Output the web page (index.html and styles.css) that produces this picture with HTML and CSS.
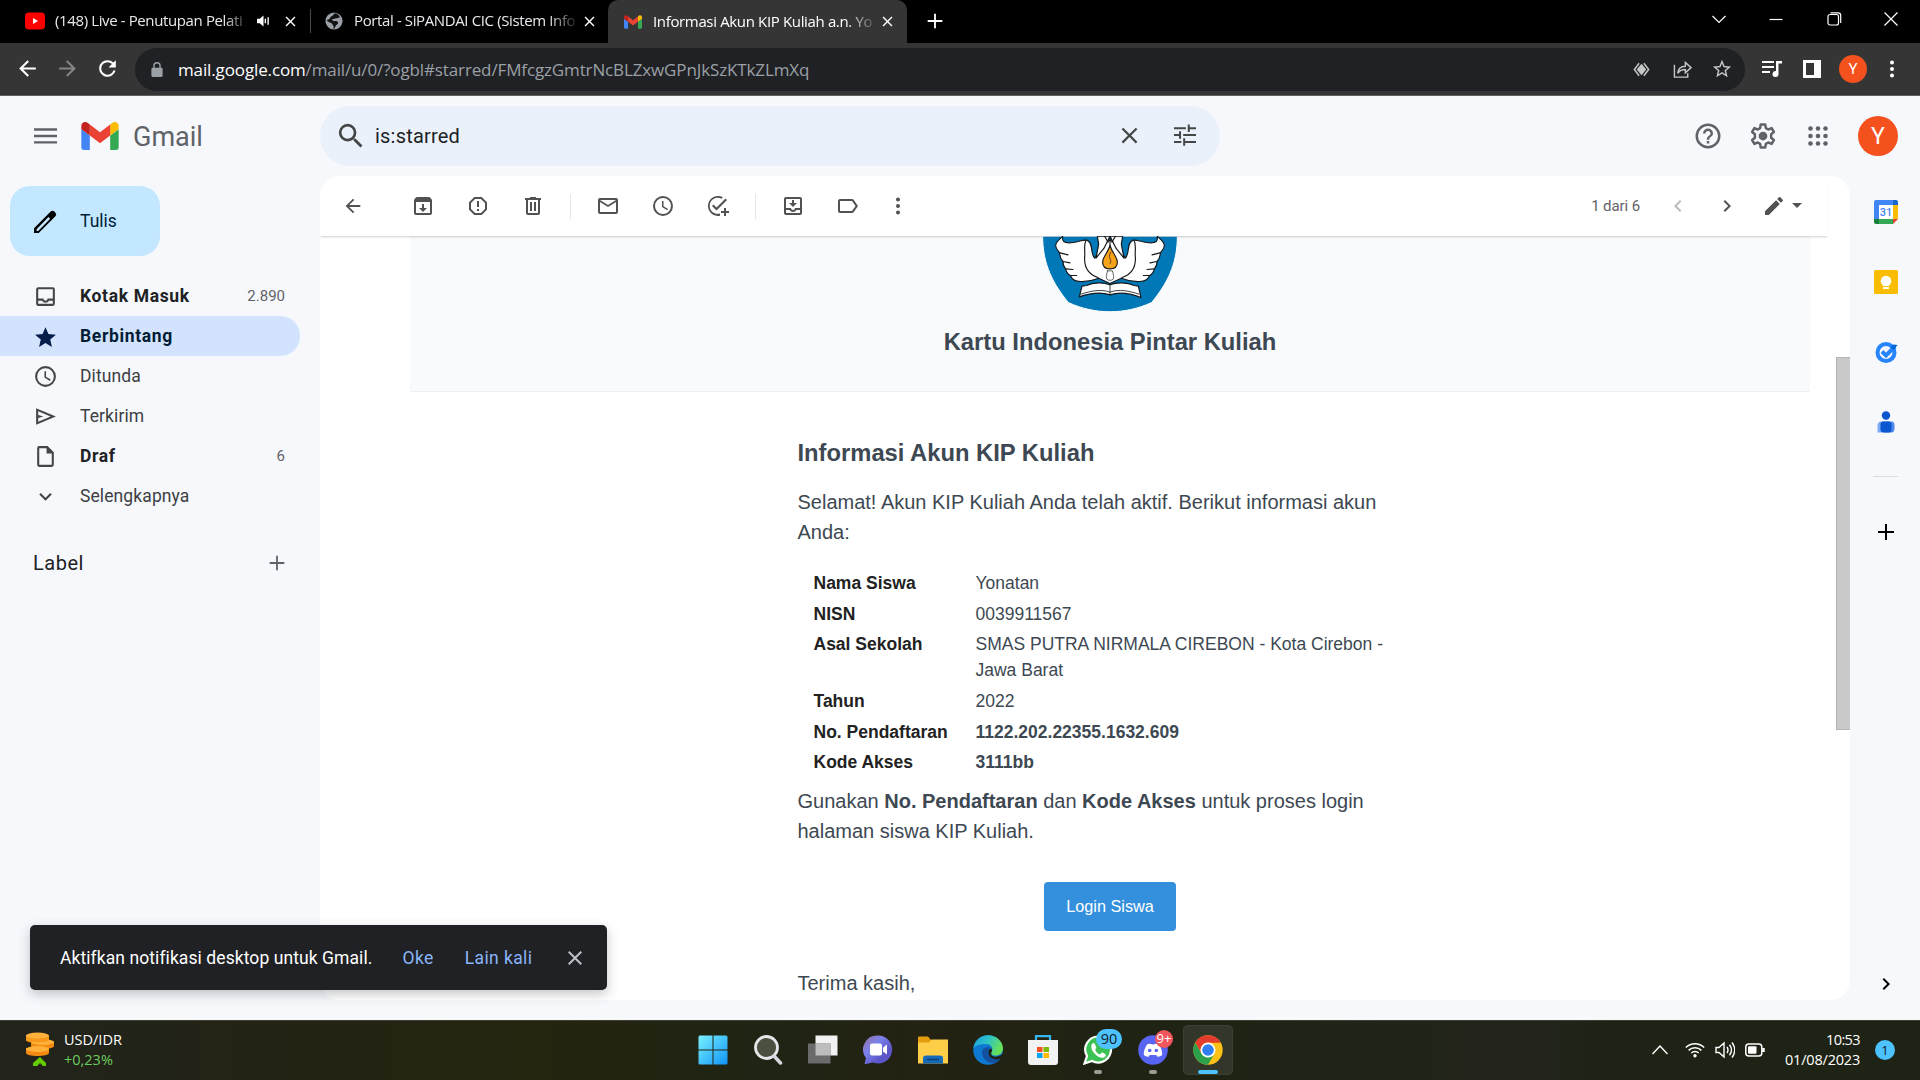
FILE: index.html
```html
<!DOCTYPE html>
<html lang="id">
<head>
<meta charset="utf-8">
<title>Informasi Akun KIP Kuliah a.n. Yonatan</title>
<link rel="stylesheet" href="styles.css">
</head>
<body>
<svg class="defs" aria-hidden="true">
  <defs>
    <symbol id="gm" viewBox="52 42 88 66"><path fill="#4285f4" d="M58 108h14V74L52 59v43c0 3.320 2.690 6 6 6"/><path fill="#34a853" d="M120 108h14c3.320 0 6-2.690 6-6V59l-20 15"/><path fill="#fbbc04" d="M120 48v26l20-15v-8c0-7.420-8.470-11.650-14.400-7.200"/><path fill="#ea4335" d="M72 74V48l24 18 24-18v26L96 92"/><path fill="#c5221f" d="M52 51v8l20 15V48l-5.600-4.200c-5.940-4.450-14.400-.22-14.400 7.200"/></symbol>
    <symbol id="x" viewBox="0 0 24 24"><path d="M19 6.410 17.590 5 12 10.590 6.410 5 5 6.410 10.590 12 5 17.590 6.410 19 12 13.410 17.590 19 19 17.590 13.410 12z"/></symbol>
    <symbol id="back" viewBox="0 0 24 24"><path d="M20 11H7.830l5.590-5.590L12 4l-8 8 8 8 1.410-1.410L7.830 13H20z"/></symbol>
    <symbol id="clock" viewBox="0 0 24 24"><path d="M12 2a10 10 0 1 0 0 20 10 10 0 0 0 0-20zm0 18a8 8 0 1 1 0-16 8 8 0 0 1 0 16zm.5-13H11v6l5.200 3.200.8-1.300-4.500-2.700z"/></symbol>
    <symbol id="right" viewBox="0 0 24 24"><path d="M10 6 8.590 7.410 13.170 12l-4.580 4.590L10 18l6-6z"/></symbol>
    <symbol id="plus" viewBox="0 0 24 24"><path d="M20 13h-7v7h-2v-7H4v-2h7V4h2v7h7z"/></symbol>
    <symbol id="dots" viewBox="0 0 24 24"><circle cx="12" cy="5.500" r="2"/><circle cx="12" cy="12" r="2"/><circle cx="12" cy="18.500" r="2"/></symbol>
  </defs>
</svg>

<div class="tabs">
  <div class="tab tab-yt">
    <svg class="fav" viewBox="0 0 20 18"><rect width="20" height="17" y=".5" rx="4" fill="#f00"/><path d="M8 6v6l5-3z" fill="#fff"/></svg>
    <span class="tab-t t1">(148) Live - Penutupan Pelati</span>
    <svg class="audio" viewBox="0 0 14 14"><path d="M0 4.500h3L7 1v12L3 9.500H0z"/><path d="M9 4.500v5M12 3v8" stroke="#fff" stroke-width="1.500"/></svg>
    <svg class="tx"><use href="#x"/></svg>
  </div>
  <div class="tab tab-portal">
    <svg class="fav globe" viewBox="0 0 20 20"><circle cx="10" cy="10" r="9.500" fill="#9aa0a6"/><path d="M10 2c3-1 6 2 6.500 4-2 0-2.500 1-4 1s-2 1-4 1 0 2 2 2 4 0 4 2-2 2-3 4-1 3-2 3c1-4-1-3-1-5S3 12 2 9c2-1 3-1 4-3s3-1 4-4z" fill="#111"/></svg>
    <span class="tab-t t2">Portal - SiPANDAI CIC (Sistem Info</span>
    <svg class="tx"><use href="#x"/></svg>
  </div>
  <div class="tab tab-active">
    <svg class="fav mail"><use href="#gm"/></svg>
    <span class="tab-t t3">Informasi Akun KIP Kuliah a.n. Yo</span>
    <svg class="tx"><use href="#x"/></svg>
  </div>
  <svg class="newtab"><use href="#plus"/></svg>
  <div class="winbtns">
    <svg viewBox="0 0 16 16"><path d="m1.500 5 6.500 6.500L14.500 5"/></svg>
    <svg viewBox="0 0 16 16"><path d="M1.500 8.500h13"/></svg>
    <svg viewBox="0 0 16 16"><rect x="2" y="3.500" width="10.500" height="10.500" rx="2"/><path d="M4.500 1.800h7.500a2.700 2.700 0 0 1 2.700 2.700V12"/></svg>
    <svg viewBox="0 0 16 16"><path d="m1.500 1.500 13 13m0-13-13 13"/></svg>
  </div>
</div>

<div class="bar">
  <svg class="nav"><use href="#back"/></svg>
  <svg class="nav fwd"><use href="#back"/></svg>
  <svg class="nav reload" viewBox="0 0 24 24"><path d="M17.650 6.350A7.960 7.960 0 0 0 12 4a8 8 0 1 0 7.730 10h-2.080A6 6 0 1 1 12 6c1.660 0 3.140.69 4.220 1.780L13 11h7V4z"/></svg>
  <div class="omni">
    <svg class="lock" viewBox="0 0 12 16"><path d="M10.500 6H10V4a4 4 0 0 0-8 0v2h-.5C.7 6 0 6.700 0 7.500v7c0 .8.700 1.500 1.500 1.500h9c.8 0 1.500-.7 1.500-1.500v-7c0-.8-.7-1.500-1.500-1.500zM3.500 4a2.500 2.500 0 0 1 5 0v2h-5z"/></svg>
    <span class="url"><b>mail.google.com</b>/mail/u/0/?ogbl#starred/FMfcgzGmtrNcBLZxwGPnJkSzKTkZLmXq</span>
    <svg class="oi" viewBox="0 0 20 20"><path d="m10 4 5 6-5 6-5-6z"/><path d="M7.500 3.500 2.500 10l5 6.500M12.500 3.500l5 6.500-5 6.500" fill="none" stroke="#c4c7c5" stroke-width="1.600"/></svg>
    <svg class="oi sh" viewBox="0 0 20 20"><path d="M1.500 5v13h14v-4M5 14c.5-5 3-7.500 8-7.500V2.500L19 8l-6 5.500V10c-4 0-6 1-8 4z" fill="none" stroke="#c4c7c5" stroke-width="1.500"/></svg>
    <svg class="oi st" viewBox="0 0 24 24"><path d="m22 9.240-7.190-.62L12 2 9.190 8.630 2 9.240l5.460 4.730L5.820 21 12 17.270 18.180 21l-1.630-7.030zM12 15.400l-3.760 2.270 1-4.280-3.320-2.880 4.380-.38L12 6.100l1.710 4.040 4.380.38-3.320 2.880 1 4.280z"/></svg>
  </div>
  <svg class="bi" viewBox="0 0 20 20"><path d="M0 2h12v2H0zm0 5h12v2H0zm0 5h8v2H0zM14 2h6v2.500h-3.500V15a3 3 0 1 1-2.500-3z"/></svg>
  <svg class="bi" viewBox="0 0 20 20"><path d="M1 1h18v18H1zm3 3v12h8V4z" fill-rule="evenodd"/></svg>
  <span class="av small">Y</span>
  <svg class="bi kebab"><use href="#dots"/></svg>
</div>

<div class="gmail">
  <header class="top">
    <svg class="burger" viewBox="0 0 24 16"><path d="M0 0h24v2.500H0zm0 6.700h24v2.500H0zm0 6.700h24v2.500H0z"/></svg>
    <svg class="glogo"><use href="#gm"/></svg>
    <span class="gname">Gmail</span>
    <div class="search">
      <svg class="mag" viewBox="0 0 24 24"><path d="M15.500 14h-.79l-.28-.27A6.470 6.470 0 0 0 16 9.500 6.500 6.500 0 1 0 9.500 16c1.610 0 3.090-.59 4.230-1.570l.27.28v.79l5 4.990L20.490 19zm-6 0a4.500 4.500 0 1 1 0-9 4.500 4.500 0 0 1 0 9z" transform="translate(-3 -3) scale(1.250)"/></svg>
      <span class="q">is:starred</span>
      <svg class="sx"><use href="#x"/></svg>
      <svg class="tune" viewBox="0 0 24 24"><path d="M0 3.500h13v2.200H0zm15-3h2.200v3H24v2.200h-6.800v3H15zM0 11h5.500V8h2.200v8H5.500v-3H0zm10 0h14v2.200H10zm-10 7.500h8v2.200H0zm10-3h2.200v3H24v2.200H12.200v3H10z"/></svg>
    </div>
    <div class="topright">
      <svg viewBox="0 0 24 24"><path d="M11 18h2v-2h-2zm1-16a10 10 0 1 0 0 20 10 10 0 0 0 0-20zm0 18a8 8 0 1 1 0-16 8 8 0 0 1 0 16zm0-14a4 4 0 0 0-4 4h2a2 2 0 1 1 4 0c0 2-3 1.750-3 5h2c0-2.250 3-2.500 3-5a4 4 0 0 0-4-4z"/></svg>
      <svg viewBox="0 0 24 24"><path fill="none" stroke="#5f6368" stroke-width="2" stroke-linejoin="round" d="M10.200 2.800h3.600l.5 2.900 1.900 1.100 2.700-1.100 1.800 3.100-2.200 1.800v2.800l2.200 1.800-1.800 3.100-2.700-1.100-1.900 1.100-.5 2.900h-3.600l-.5-2.900-1.900-1.100-2.700 1.100-1.800-3.100 2.200-1.800v-2.800L3.300 8.800l1.800-3.100 2.700 1.100 1.900-1.100z"/><circle cx="12" cy="12" r="3.500"/></svg>
      <svg viewBox="0 0 24 24"><g id="r"><circle cx="4.500" cy="4.500" r="2.300"/><circle cx="12" cy="4.500" r="2.300"/><circle cx="19.500" cy="4.500" r="2.300"/></g><use href="#r" y="7.500"/><use href="#r" y="15"/></svg>
      <span class="av">Y</span>
    </div>
  </header>

  <div class="body">
    <aside class="side">
      <div class="compose">
        <svg viewBox="0 0 24 24"><path d="M1 18.500 17 2.500a2.500 2.500 0 0 1 3.500 0l1 1a2.500 2.500 0 0 1 0 3.500l-16 16H1zm2.500 1V21H5L16.500 9.300l-1.700-1.700z" fill-rule="evenodd"/></svg>
        <span>Tulis</span>
      </div>
      <div class="row bold"><svg viewBox="0 0 24 24"><path d="M19 3H5a2 2 0 0 0-2 2v14c0 1.100.9 2 2 2h14a2 2 0 0 0 2-2V5a2 2 0 0 0-2-2zm0 16H5v-3h3.560a4 4 0 0 0 6.880 0H19zm0-5h-5a2 2 0 0 1-4 0H5V5h14z"/></svg><span>Kotak Masuk</span><i>2.890</i></div>
      <div class="row bold active"><svg viewBox="0 0 24 24"><path d="m12 18.270 6.180 3.730-1.640-7.030L22 10.240l-7.190-.61L12 3 9.190 9.630 2 10.240l5.460 4.730L5.820 22z"/></svg><span>Berbintang</span></div>
      <div class="row"><svg viewBox="0 0 24 24"><use href="#clock"/></svg><span>Ditunda</span></div>
      <div class="row"><svg viewBox="0 0 24 24"><path d="M3 4v16l19-8zm2 3 11.850 5L5 17v-3.500l5-1.500-5-1.500z"/></svg><span>Terkirim</span></div>
      <div class="row bold"><svg viewBox="0 0 24 24"><path d="M14 2H6a2 2 0 0 0-2 2v16c0 1.100.9 2 2 2h12a2 2 0 0 0 2-2V8zM6 20V4h7v5h5v11z"/></svg><span>Draf</span><i>6</i></div>
      <div class="row"><svg viewBox="0 0 24 24"><path d="M7.410 8.590 12 13.170l4.590-4.580L18 10l-6 6-6-6z"/></svg><span>Selengkapnya</span></div>
      <div class="label"><span>Label</span><svg><use href="#plus"/></svg></div>
    </aside>

    <main class="panel">
      <div class="tools">
        <span class="s w66"><svg><use href="#back"/></svg></span>
        <span class="s a"><svg viewBox="0 0 24 24"><path d="M20.540 5.230 19.150 3.550A1.450 1.450 0 0 0 18 3H6c-.47 0-.88.21-1.160.55L3.460 5.230C3.170 5.570 3 6.020 3 6.500V19a2 2 0 0 0 2 2h14a2 2 0 0 0 2-2V6.500c0-.48-.17-.93-.46-1.270zM5 19V8h14v11zm6-9h2v4h3l-4 4-4-4h3z"/></svg></span>
        <span class="s"><svg viewBox="0 0 24 24"><path d="M15.730 3H8.270L3 8.270v7.460L8.270 21h7.460L21 15.730V8.270zM19 14.900 14.900 19H9.100L5 14.900V9.100L9.100 5h5.800L19 9.100zM11 7h2v6h-2zm0 8h2v2h-2z"/></svg></span>
        <span class="s"><svg viewBox="0 0 24 24"><path d="M15 4V3H9v1H4v2h1v13a2 2 0 0 0 2 2h10a2 2 0 0 0 2-2V6h1V4zm2 15H7V6h10zM9 8h2v9H9zm4 0h2v9h-2z"/></svg></span>
        <span class="sep"></span>
        <span class="s"><svg viewBox="0 0 24 24"><path d="M20 4H4a2 2 0 0 0-2 2v12c0 1.100.9 2 2 2h16a2 2 0 0 0 2-2V6a2 2 0 0 0-2-2zm0 14H4V8l8 5 8-5zm-8-7L4 6h16z"/></svg></span>
        <span class="s"><svg><use href="#clock"/></svg></span>
        <span class="s"><svg viewBox="0 0 24 24"><path d="M14 19.500A8 8 0 1 1 15.500 4.800l1.400-1.500A10 10 0 1 0 14 21.800zM7.500 10.500 6 12l4.500 4.500L21 6l-1.500-1.500-9 9zM20 14h-2v3h-3v2h3v3h2v-3h3v-2h-3z"/></svg></span>
        <span class="sep"></span>
        <span class="s"><svg viewBox="0 0 24 24"><path d="M19 3H5a2 2 0 0 0-2 2v14c0 1.100.9 2 2 2h14a2 2 0 0 0 2-2V5a2 2 0 0 0-2-2zm0 16H5v-3h3.560a4 4 0 0 0 6.880 0H19zm0-5h-5a2 2 0 0 1-4 0H5V5h14zM11 6h2v3h3l-4 4-4-4h3z"/></svg></span>
        <span class="s"><svg viewBox="0 0 24 24"><path d="M16 5H4a2 2 0 0 0-2 2v10c0 1.100.9 2 2 2h12c.67 0 1.270-.34 1.630-.84L22 12l-4.370-6.160A2 2 0 0 0 16 5zm0 12H4V7h12l3.550 5z"/></svg></span>
        <span class="s w45"><svg><use href="#dots"/></svg></span>
        <span class="count">1 dari 6</span>
        <span class="s w49 dim"><svg class="flip"><use href="#right"/></svg></span>
        <span class="s w49"><svg><use href="#right"/></svg></span>
        <span class="s w26"><svg viewBox="0 0 24 24"><path d="M3 17.250V21h3.750L17.810 9.940l-3.750-3.750zM20.710 7.040a1 1 0 0 0 0-1.410l-2.340-2.340a1 1 0 0 0-1.410 0l-1.830 1.830 3.750 3.750z"/></svg></span>
        <span class="s w20"><svg viewBox="0 0 24 24"><path d="m7 9 5 5 5-5z"/></svg></span>
      </div>
      <div class="scroll">
        <div class="mail-head">
          <svg class="emblem" viewBox="246 198 408 230">
            <path d="M248 198h404c0 70-20 130-77 199-80 37-170 37-250 0-57-69-77-129-77-199z" fill="#0077b6" stroke="#fff" stroke-width="3"/>
            <g fill="#fff" stroke="#16181a" stroke-width="3.500" stroke-linejoin="round" stroke-linecap="round">
              <path d="M308 198c-6 8-20 14-21 28 0 10 6 14 12 22 0 12 4 20 10 26 0 10 2 16 8 22 2 10 6 16 14 20 6 14 16 18 30 18 20 1 40-4 55-10l34 16 34-16c15 6 35 11 55 10 14 0 24-4 30-18 8-4 12-10 14-20 6-6 8-12 8-22 6-6 10-14 10-26 6-8 12-12 12-22-1-14-15-20-21-28 2 16-4 20-20 20-20 0-40-10-52-8-14 4-14 20-16 34-2 10-4 16-8 20-8-10-12-30-20-40l-26-14-26 14c-8 10-12 30-20 40-4-4-6-10-8-20-2-14-2-30-16-34-12-2-32 8-52 8-16 0-22-4-20-20z"/>
              <path d="M378 210c-8 14-2 30-4 50-2 30 10 52 40 62M522 210c8 14 2 30 4 50 2 30-10 52-40 62M300 248l24 6M309 274l21 4M317 296l22 2M332 316l18 0M600 248l-24 6M591 274l-21 4M583 296l-22 2M568 316h-18" fill="none"/>
              <path d="M412 198l4 24-8 42 24-30 18-36 18 36 24 30-8-42 4-24z"/>
              <path d="M450 202v30M434 198l10 18M466 198l-10 18" fill="none"/>
              <path d="M450 226c-6 22-22 34-22 50 0 12 8 20 22 20s22-8 22-20c0-16-16-28-22-50z" fill="#f6a21b"/>
              <path d="M452 246c-12 22 8 20-2 34" fill="none" stroke-width="2"/>
              <path d="M443 302h14c4 10 2 10 4 18 2 14-24 14-22 0 2-8 0-8 4-18z" stroke-width="2"/>
              <path d="M450 344c-20-8-50-8-70 2l-14 2-8 32c30-10 62-16 92-6 30-10 62-4 93 8l-8-34-12-2c-22-10-53-10-73-2z"/>
              <path d="M450 344v28M363 372c30-10 60-16 87-6 27-10 57-4 87 6" fill="none" stroke-width="2.500"/>
            </g>
          </svg>
          <h1 class="h">Kartu Indonesia Pintar Kuliah</h1>
        </div>
        <article class="msg">
          <h2 class="h">Informasi Akun KIP Kuliah</h2>
          <p>Selamat! Akun KIP Kuliah Anda telah aktif. Berikut informasi akun<br>Anda:</p>
          <table>
            <tr><th>Nama Siswa</th><td>Yonatan</td></tr>
            <tr><th>NISN</th><td>0039911567</td></tr>
            <tr><th>Asal Sekolah</th><td>SMAS PUTRA NIRMALA CIREBON - Kota Cirebon -<br>Jawa Barat</td></tr>
            <tr><th>Tahun</th><td>2022</td></tr>
            <tr><th>No. Pendaftaran</th><td><b>1122.202.22355.1632.609</b></td></tr>
            <tr><th>Kode Akses</th><td><b>3111bb</b></td></tr>
          </table>
          <p class="use">Gunakan <b>No. Pendaftaran</b> dan <b>Kode Akses</b> untuk proses login<br>halaman siswa KIP Kuliah.</p>
          <div class="btnrow"><a class="btn">Login Siswa</a></div>
          <p class="thanks">Terima kasih,</p>
        </article>
        <div class="thumb"></div>
      </div>
    </main>

    <aside class="rail">
      <svg viewBox="0 0 24 24"><path fill="#4285f4" d="M0 2a2 2 0 0 1 2-2h17v5H5v14H0z"/><path fill="#1967d2" d="M19 0h3a2 2 0 0 1 2 2v3h-5z"/><path fill="#fbbc04" d="M19 5h5v14h-5z"/><path fill="#34a853" d="M5 19h14v5H5z"/><path fill="#188038" d="M0 19h5v5H2a2 2 0 0 1-2-2z"/><path fill="#ea4335" d="M19 19h5l-5 5z"/><path fill="#fff" d="M5 5h14v14H5z"/><text x="12" y="16" text-anchor="middle" font-family="Roboto, sans-serif" font-size="11" font-weight="500" fill="#4285f4">31</text></svg>
      <svg viewBox="0 0 24 24"><rect width="24" height="24" rx="1.500" fill="#fbbc04"/><circle cx="12" cy="11" r="5.300" fill="#fff"/><path d="M9 14h6v2H9zm0 3h6v2H9z" fill="#fff"/></svg>
      <svg viewBox="0 0 24 24"><circle cx="12" cy="12.500" r="8.500" fill="none" stroke="#2684fc" stroke-width="4"/><path d="m8 11.500 4 4 9-9" fill="none" stroke="#2684fc" stroke-width="4"/><path d="m16.500 7.500 3-3 4 .5-4 5z" fill="#0066da"/></svg>
      <svg viewBox="0 0 24 24"><circle cx="12" cy="5.500" r="4.200" fill="#0b57d0"/><path d="M7 11.500h5v11H3.500V16c0-3 1.500-4.500 3.500-4.500z" fill="#7baaf7"/><path d="M12 11.500h5.500c2 0 3 1.500 3 4V18c0 3-1 4.500-3 4.500H12z" fill="#4f86ec"/><rect x="6.500" y="11.500" width="11" height="11" rx="3" fill="#0b57d0"/></svg>
      <hr>
      <svg class="add"><use href="#plus"/></svg>
      <svg class="hide"><use href="#right"/></svg>
    </aside>
  </div>
</div>

<div class="snack">
  <span>Aktifkan notifikasi desktop untuk Gmail.</span>
  <a class="ok">Oke</a>
  <a class="later">Lain kali</a>
  <svg><use href="#x"/></svg>
</div>

<footer class="taskbar">
  <div class="widget">
    <svg viewBox="0 0 28 36"><path d="M7 34h4l3-3 3 3h3v-3l-6-6-7 6z" fill="#6c0"/><g fill="#f28a12"><path d="M0 16h23v5c0 4-23 4-23 0z"/><path d="M5 9h23v5c0 4-23 4-23 0z"/><path d="M0 3h23v5c0 4-23 4-23 0z"/></g><g fill="#ffb13b"><ellipse cx="11.500" cy="17" rx="11.500" ry="3"/><ellipse cx="16.500" cy="10" rx="11.500" ry="3"/><path d="M0 4h23v4c0 3-23 3-23 0z" fill="#f79a1c"/><ellipse cx="11.500" cy="3.500" rx="11.500" ry="3"/></g></svg>
    <div><span>USD/IDR</span><span class="up">+0,23%</span></div>
  </div>
  <div class="apps">
    <span><svg viewBox="0 0 30 30"><defs><linearGradient id="w" x1="0" y1="0" x2="30" y2="30" gradientUnits="userSpaceOnUse"><stop stop-color="#7df3ff"/><stop offset="1" stop-color="#0c92f7"/></linearGradient></defs><path fill="url(#w)" d="M.5 2q0-1.500 1.500-1.500h12.500v14H.5zM15.500.5H28q1.500 0 1.500 1.500v12.500h-14zM.5 15.500h14v14H2Q.5 29.500.5 28zm15 0h14V28q0 1.500-1.500 1.500H15.500z"/></svg></span>
    <span><svg viewBox="0 0 30 30"><circle cx="13.500" cy="12.500" r="11" fill="#4a4f40" stroke="#e4e6ea" stroke-width="2.800"/><path d="m21 21 6.500 7" stroke="#d5d8de" stroke-width="3.500" stroke-linecap="round"/></svg></span>
    <span><svg viewBox="0 0 30 30"><path fill="#f2f2f2" d="M7.500.5h22v20h-22z"/><path fill="#6b6b6b" d="M0 8.500h22.500v20H0z"/><path fill="#bdbdbd" d="M7.500 8.500h15v12h-15z"/></svg></span>
    <span><svg viewBox="0 0 30 30"><defs><linearGradient id="c" x1="0" y1="0" x2="1" y2="1"><stop stop-color="#9a6a96"/><stop offset=".35" stop-color="#7b83eb"/><stop offset=".7" stop-color="#5b55c8"/></linearGradient></defs><path fill="url(#c)" d="M15 .5a14 14 0 1 1-5 27L1.500 29.300 3 23A14 14 0 0 1 15 .5z"/><rect x="7" y="8.500" width="12" height="12" rx="2" fill="#fff"/><path d="m20 12.500 4-3v10l-4-3z" fill="#fff"/></svg></span>
    <span><svg viewBox="0 0 30 30"><path fill="#e39c0e" d="M0 2.500Q0 1.500 1 1.500h9l3 3.500v4H0z"/><path fill="#ffce48" d="M0 7.500h11l2.500-3H30v24H0z"/><path fill="#1469b8" d="M5 28.500v-5q0-3 3-3h14q3 0 3 3v5z"/><path stroke="#0a3f77" stroke-width="1.500" d="M9 24.500h12"/></svg></span>
    <span><svg viewBox="0 0 30 30"><defs><linearGradient id="e" x1="0" y1="0" x2="1" y2=".4"><stop stop-color="#1a9de0"/><stop offset=".5" stop-color="#2cc3c8"/><stop offset="1" stop-color="#66e05a"/></linearGradient></defs><circle cx="15" cy="15" r="14.800" fill="#0f78d0"/><path fill="#1351a0" d="M9 17c0 7 6 12 13 11 3-1 5-3 6.500-5.500-8 3-13-1-13-6.500 0-2 .5-3 1.500-4-5 0-8 2-8 5z"/><path fill="url(#e)" d="M.3 13.500C1.500 5.500 7.500.2 15 .2c8.500 0 15 6.300 15 13.300 0 4-3 7-7 7-4.500 0-5.500-2-4.500-3.500 2-3 .5-8-5.500-8C7 9 2 10.500.3 13.500z"/><path fill="#1e2313" d="M18.500 17c-1.500 3 1.500 5.500 5.500 4.500 2-.5 4-1.500 6-2.500v4.500c-1 0-2 0-3 .3-6 2-11.500-1.300-11.500-6.300 0-3 1.500-4.500 2.500-4 1 .5 1.500 2 .5 3.500z"/></svg></span>
    <span><svg viewBox="0 0 30 30"><path d="M8 6V1.200h14V6" fill="none" stroke="#35b6ee" stroke-width="2.200"/><path fill="#f2f2f2" d="M0 5h30v22q0 3-3 3H3q-3 0-3-3z"/><path fill="#f25022" d="M9 12h5.500v5H9z"/><path fill="#7fba00" d="M15.500 12H21v5h-5.500z"/><path fill="#00a4ef" d="M9 18h5.500v5H9z"/><path fill="#ffb900" d="M15.500 18H21v5h-5.500z"/></svg></span>
    <span class="run"><svg viewBox="0 0 30 30"><path d="M15.500 1.500a13 13 0 1 1-6.500 24.500L1.500 28.500 4 21A13 13 0 0 1 15.500 1.500z" fill="#3cc254" stroke="#fff" stroke-width="2.200"/><path fill="#fff" d="M10 8c-3 2-2 7 2 11s8 5 10.500 2.500c1-1.500 0-2.500-3-4-1-.500-2 2-3 1.700-2-.7-4-3-4.300-4.500 0-.8 1.500-1.500 1-2.500-.8-2-1.500-4.700-3.200-4.200z"/></svg><em class="b90">90</em></span>
    <span class="run"><svg viewBox="0 0 30 30"><circle cx="15" cy="15" r="14.800" fill="#5865f2"/><path fill="#fff" d="M9 9.500c3-1.500 3 0 6 0s3-1.500 6 0c2 3 3.500 7 3.200 10.500-2 1.500-4 2-5 1.500l-1-1.500h-6.400l-1 1.500c-1 .5-3 0-5-1.500C5.500 16.500 7 12.500 9 9.500z"/><circle cx="11.700" cy="15.500" r="1.800" fill="#5865f2"/><circle cx="18.300" cy="15.500" r="1.800" fill="#5865f2"/></svg><em class="b9">9+</em></span>
    <span class="run cur"><svg viewBox="0 0 48 48"><circle cx="24" cy="24" r="23.500" fill="#fbc116"/><path fill="#e33b2e" d="M3.600 12.200a23.500 23.500 0 0 1 40.800 0H24a11.800 11.800 0 0 0-10.200 17.700z"/><path fill="#2ca14c" d="M3.600 12.200 13.800 29.900A11.800 11.800 0 0 0 34.200 29.900L24 47.500A23.500 23.500 0 0 1 3.600 12.200z"/><circle cx="24" cy="24" r="12" fill="#fff"/><circle cx="24" cy="24" r="9.300" fill="#2f7ff0"/></svg></span>
  </div>
  <div class="tray">
    <svg class="up2" viewBox="0 0 16 10"><path d="m.5 9 7.500-8 7.500 8"/></svg>
    <svg class="wifi" viewBox="0 0 20 16"><path d="M.8 5.500a13 13 0 0 1 18.400 0M3.600 8.400a9 9 0 0 1 12.800 0M6.300 11a5.300 5.300 0 0 1 7.400 0" stroke-width="1.500"/><circle cx="10" cy="13.800" r="1.700" fill="#fff" stroke="none"/></svg>
    <svg class="vol" viewBox="0 0 20 18"><path d="M1 6.500h3l5-4.500v14l-5-4.500H1zM12 6q2 3 0 6M14.500 3.800q4 5.200 0 10.400M17 1.500q5.500 7.500 0 15"/></svg>
    <svg class="bat" viewBox="0 0 20 14"><rect x=".8" y="1" width="16" height="12" rx="3" stroke-width="1.500"/><rect x="3" y="3.200" width="8.500" height="7.600" rx="1" fill="#fff" stroke="none"/><path d="M18.500 5v4" stroke-width="2.500"/></svg>
    <div class="time"><span class="hm">10:53</span><span>01/08/2023</span></div>
    <span class="n">1</span>
  </div>
</footer>
</body>
</html>
```
FILE: styles.css
```css
* { box-sizing: border-box; }
body { margin: 0; width: 1920px; height: 1080px; overflow: hidden; display: flex; flex-direction: column; background: #f6f8fc; font-family: Roboto, "Liberation Sans", sans-serif; }
svg { display: block; flex: none; width: 25px; height: 25px; }
.defs { position: absolute; width: 0; height: 0; }

.tabs { height: 43px; flex: none; background: #000; display: flex; align-items: center; color: #e8eaed; font: 15px "Open Sans", "Noto Sans", sans-serif; padding-bottom: 1px; }
.tab { display: flex; align-items: center; height: 24px; flex: none; }
.tab-yt { width: 311px; padding-left: 25px; border-right: 1px solid #4a4a4a; }
.tab-portal { width: 297px; padding-left: 14px; }
.tab-active { width: 299px; height: 43px; padding-left: 16px; background: #353535; border-radius: 10px 10px 0 0; margin-bottom: -1px; }
.fav { width: 20px; height: 18px; }
.globe { width: 18px; }
.mail { width: 18px; height: 14px; }
.tab-t { white-space: nowrap; margin-bottom: 2px; -webkit-mask-image: linear-gradient(90deg, #000 88%, transparent 102%); }
.t1 { width: 192px; margin-left: 10px; letter-spacing: -.38px; }
.t2 { width: 221px; margin-left: 11px; letter-spacing: -.38px; }
.t3 { width: 220px; margin-left: 11px; color: #fff; letter-spacing: -.35px; }
.audio { width: 13px; height: 14px; fill: #fff; margin-left: 10px; }
.tx { width: 17px; height: 17px; fill: #fff; }
.tab-yt .tx { margin-left: 12px; }
.tab-portal .tx, .tab-active .tx { margin-left: 6px; }
.newtab { width: 22px; height: 22px; fill: #fff; margin-left: 17px; }
.winbtns { margin-left: auto; display: flex; gap: 41.500px; margin-right: 21px; margin-bottom: 5px; }
.winbtns svg { width: 16px; height: 16px; fill: none; stroke: #fff; stroke-width: 1.200; }

.bar { height: 53px; flex: none; background: #353535; border-bottom: 1px solid #606060; display: flex; align-items: center; padding: 0 15px 0 15px; }
.nav { width: 25px; height: 25px; fill: #fff; margin-bottom: 1px; }
.fwd { transform: scaleX(-1); fill: #858585; margin-left: 15px; }
.reload { margin-left: 15px; }
.omni { margin-left: 15px; width: 1610px; height: 43px; border-radius: 22px; background: #202124; display: flex; align-items: center; padding-left: 16px; }
.lock { width: 12px; height: 15px; fill: #9aa0a6; }
.url { margin-left: 15px; font: 17px "Open Sans", "Noto Sans", sans-serif; letter-spacing: -.13px; color: #9aa0a6; width: max-content; white-space: nowrap; }
.url b { color: #fff; font-weight: 400; }
.oi { fill: #c4c7c5; width: 19px; height: 19px; }
.url + .oi { margin-left: auto; }
.sh { margin-left: 22px; }
.st { width: 22px; height: 22px; margin: 0 12px 0 19px; }
.bi { width: 20px; height: 20px; fill: #fff; margin-left: 17px; }
.bi + .bi { margin-left: 20px; }
.av { width: 40px; height: 40px; border-radius: 50%; background: #f4511e; color: #fff; font-size: 23px; display: flex; align-items: center; justify-content: center; }
.small { width: 28px; height: 28px; font-size: 15px; margin-left: 17px; }
.bar .kebab { width: 24px; height: 24px; margin-left: 13px; }

.gmail { flex: 1; min-height: 0; display: flex; flex-direction: column; }
.top { height: 80px; flex: none; display: flex; align-items: center; fill: #5f6368; }
.burger { width: 23px; height: 16px; margin-left: 34px; }
.glogo { width: 38px; height: 28px; margin-left: 24px; }
.gname { width: 187px; margin-left: 14px; font-size: 27px; color: #5f6368; line-height: 30px; margin-top: 1px; }
.search { width: 900px; height: 60px; border-radius: 30px; background: #eaf1fb; display: flex; align-items: center; padding-left: 18px; fill: #444746; }
.mag { width: 26px; height: 26px; overflow: visible; }
.q { width: 742px; margin-left: 11px; font-size: 20px; letter-spacing: .2px; color: #202124; }
.sx { width: 27px; height: 27px; margin-right: 30px; margin-left: -1px; margin-bottom: 1px; }
.tune { width: 24px; height: 22px; margin-bottom: 2px; }
.topright { margin-left: auto; margin-right: 22px; display: flex; align-items: center; gap: 25px; }
.topright svg { width: 30px; height: 30px; }
.topright svg:nth-child(3) { width: 24px; height: 24px; margin: 0 3px; }

.body { flex: 1; display: flex; min-height: 0; }
.side { width: 320px; padding-top: 10px; flex: none; color: #202124; font-size: 17.500px; }
.compose { margin: 0 0 20px 10px; width: 150px; height: 70px; border-radius: 20px; background: #c2e7ff; display: flex; align-items: center; padding-left: 23px; gap: 22px; color: #001d35; }
.row { width: 300px; height: 40px; display: flex; align-items: center; padding: 0 15px 0 33px; fill: #444746; color: #3c4043; letter-spacing: .1px; }
.row span { margin-left: 22px; }
.row i { margin-left: auto; font: 400 15px Roboto, sans-serif; color: #5f6368; }
.bold { font-weight: 700; color: #202124; letter-spacing: .65px; }
.row.bold i { letter-spacing: 0; }
.active { background: #d3e3fd; border-radius: 0 20px 20px 0; color: #001d35; fill: #041e49; }
.label { width: 300px; height: 40px; margin-top: 27px; padding: 0 12px 0 33px; display: flex; align-items: center; justify-content: space-between; font-size: 20px; letter-spacing: .5px; fill: #5f6368; }
.label svg { width: 22px; height: 22px; }

.panel { width: 1530px; height: 824px; border-radius: 20px; background: #fff; overflow: hidden; flex: none; }
.tools { width: 1508px; height: 60px; display: flex; align-items: center; fill: #505351; box-shadow: 0 2px 2px -1px rgba(60, 64, 67, .25); position: relative; z-index: 1; }
.s { width: 55px; flex: none; display: flex; justify-content: center; }
.w66 { width: 66px; } .w45 { width: 45px; } .w49 { width: 49px; } .w26 { width: 26px; } .w20 { width: 20px; }
.a { margin-left: 9px; }
.tools svg { width: 24px; height: 24px; }
.tools .w66 svg { width: 22px; height: 22px; }
.dim { fill: #b9bcbe; }
.flip { transform: scaleX(-1); }
.sep { width: 20px; height: 25px; flex: none; background: linear-gradient(#e4e6e8, #e4e6e8) center / 1px 100% no-repeat; }
.count { margin: 0 13px 0 auto; font-size: 15px; letter-spacing: -.1px; color: #5f6368; }
.tools .w26 { margin-left: 10px; }
.tools .w20 { margin-right: 21px; }
.scroll { display: flex; flex-direction: column; height: 764px; position: relative; }
.mail-head { margin-left: 90px; width: 1400px; height: 156px; flex: none; background: #f8fafc; border-bottom: 1px solid #edeff2; display: flex; flex-direction: column; align-items: center; }
.emblem { width: 136px; height: 77px; }
.h { margin: 0; color: #3d4852; font: 700 23.750px/30px "Liberation Sans", Arial, sans-serif; white-space: nowrap; }
h1.h { margin-top: 14px; }
.msg { margin-left: 477.500px; width: 625px; color: #3d4852; font: 20px/30px "Liberation Sans", Arial, sans-serif; padding-top: 46px; }
.msg p { margin: 19px 0 0; white-space: nowrap; }
table { border-spacing: 0; margin: 21px 0 0 16px; font-size: 17.500px; line-height: 26px; }
th { width: 162px; text-align: left; vertical-align: top; color: #222; padding: 2.300px 0; }
td { padding: 2.300px 0; white-space: nowrap; }
.msg .use { margin-top: 8px; }
.btnrow { display: flex; justify-content: center; margin-top: 36px; }
.btn { width: 132px; height: 49px; border-radius: 4px; background: #3490dc; color: #fff; font-size: 16.250px; display: flex; align-items: center; justify-content: center; white-space: nowrap; }
.msg .thanks { margin-top: 37px; }
.thumb { position: absolute; right: 0; top: 121px; width: 14px; height: 373px; background: #c9c9c9; border: 1px solid #b4b4b4; border-right: 0; }

.rail { width: 70px; display: flex; flex-direction: column; align-items: center; padding: 24px 0 0 1px; }
.rail svg { width: 24px; height: 24px; margin-bottom: 46px; }
.rail hr { width: 25px; height: 1px; background: #dcdcdc; border: 0; margin: -4px 0 0; }
.rail .add { margin: 43px 0 0; }
.rail .hide { margin-top: auto; margin-bottom: 24px; }

.snack { position: absolute; left: 30px; top: 925px; width: 577px; height: 65px; border-radius: 5px; background: #202124; color: #fff; display: flex; align-items: center; padding-left: 30px; font-size: 17.500px; letter-spacing: .08px; white-space: nowrap; box-shadow: 0 4px 12px rgba(60, 64, 67, .3); }
.snack a { color: #8ab4f8; letter-spacing: .4px; }
.ok { margin-left: 30px; }
.later { margin-left: 31px; }
.snack svg { width: 24px; height: 24px; fill: #bdc1c6; margin-left: auto; margin-right: 20px; }

.taskbar { height: 60px; flex: none; border-top: 1px solid #3a4230; background: linear-gradient(90deg, #22231b 0, #24240f 28%, #1f2414 40%, #242212 48%, #1e2313 60%, #22241b 80%, #1e2315 84%, #1e2315); display: flex; align-items: center; color: #fff; font: 14.500px/20px "Open Sans", "Noto Sans", sans-serif; padding-bottom: 1px; }
.widget { display: flex; align-items: center; width: 685px; padding-left: 26px; gap: 10px; }
.widget svg { width: 28px; height: 36px; }
.widget div, .time { margin-bottom: 1px; }
.widget span, .time span { display: block; width: max-content; }
.widget .up { color: #6ccb5f; }
.apps { display: flex; }
.apps > span { width: 55px; height: 50px; display: flex; align-items: center; justify-content: center; position: relative; }
.apps svg { width: 30px; height: 30px; }
.apps .cur { width: 50px; margin-left: 2.500px; background: rgba(255,255,255,.09); border-radius: 5px; border: 1px solid rgba(255,255,255,.05); }
.run::after { content: ""; position: absolute; bottom: 1px; width: 8px; height: 4px; border-radius: 2px; background: #9a9b94; }
.cur::after { width: 20px; background: #4cc2ff; bottom: 0; }
.apps em { position: absolute; font-style: normal; text-align: center; }
.b90 { left: 26px; top: 4px; width: 26px; height: 20px; border-radius: 10px; background: #4cc2ff; color: #10202a; line-height: 20px; }
.b9 { left: 30px; top: 5px; width: 18px; height: 18px; border-radius: 9px; background: #f0565b; font-size: 13px; line-height: 17px; }
.tray { margin-left: auto; display: flex; align-items: center; margin-right: 25px; }
.tray svg { fill: none; stroke: #fff; stroke-width: 1.400; }
.tray .up2 { width: 16px; height: 10px; }
.tray .wifi { width: 20px; height: 16px; margin-left: 17px; }
.tray .vol { width: 20px; height: 18px; margin-left: 10px; }
.tray .bat { width: 20px; height: 14px; margin-left: 10px; }
.time { width: 95px; display: flex; flex-direction: column; align-items: flex-end; letter-spacing: -.2px; }
.time .hm { letter-spacing: -.6px; }
.n { width: 20px; height: 20px; margin-left: 15px; border-radius: 50%; background: #4cc2ff; color: #10202a; font-size: 13px; text-align: center; line-height: 20px; }
```
